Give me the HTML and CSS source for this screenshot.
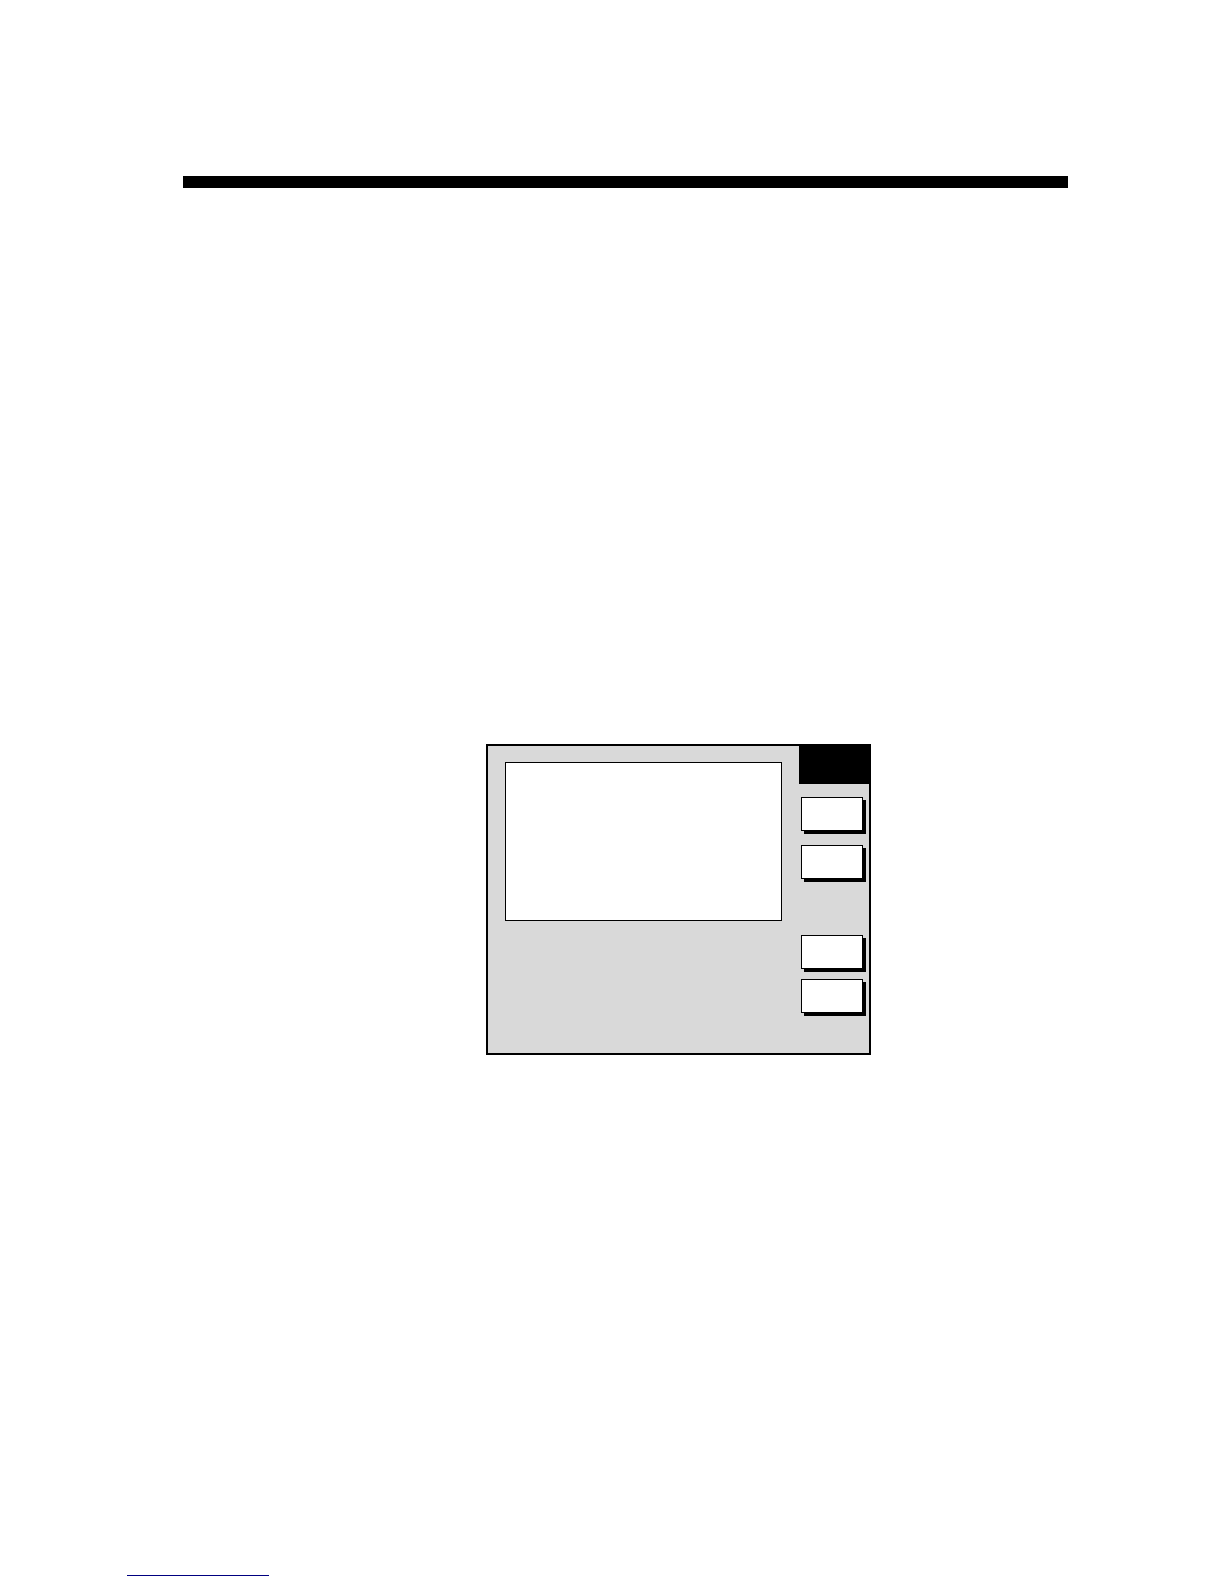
FILE: index.html
```html
<!DOCTYPE html>
<html lang="en">
<head>
    <meta charset="UTF-8">
    <meta name="viewport" content="width=device-width, initial-scale=1.0">
    <title>Display</title>
    <link rel="stylesheet" href="styles.css">
</head>
<body>

    <header class="page-header">
        <hr class="rule">
    </header>

    <main class="content">
        <div class="panel">
            <div class="screen"></div>
            <div class="softkeys">
                <div class="softkeys-title"></div>
                <div class="key-group">
                    <button type="button" class="key" aria-label="Soft key 1"></button>
                    <button type="button" class="key" aria-label="Soft key 2"></button>
                </div>
                <div class="key-group key-group-lower">
                    <button type="button" class="key" aria-label="Soft key 3"></button>
                    <button type="button" class="key" aria-label="Soft key 4"></button>
                </div>
            </div>
        </div>
    </main>

    <footer class="page-footer">
        <a href="#" class="footer-link" aria-label="Back to top"></a>
    </footer>

</body>
</html>
```
FILE: styles.css
```css
* {
    box-sizing: border-box;
}

body {
    display: flex;
    flex-direction: column;
    min-height: 100vh;
    margin: 0;
    background-color: #fff;
    font-family: "Liberation Sans", Arial, sans-serif;
}

.page-header {
    padding: 176px 156px 0 183px;
}

.rule {
    height: 12px;
    margin: 0;
    border: 0;
    background-color: #000;
}

.content {
    display: flex;
    justify-content: center;
    flex: 1;
    padding: 556px 0 0 133px;
}

.panel {
    display: grid;
    grid-template-columns: 1fr 70px;
    gap: 17px;
    align-self: flex-start;
    width: 385px;
    padding-left: 17px;
    border: 2px solid #000;
    background-color: #d9d9d9;
}

.screen {
    height: 159px;
    margin-top: 16px;
    border: 1px solid #000;
    background-color: #fff;
}

.softkeys {
    padding-bottom: 40px;
}

.softkeys-title {
    height: 38px;
    margin-bottom: 13px;
    background-color: #000;
}

.key-group {
    display: flex;
    flex-direction: column;
    gap: 14px;
    padding: 0 6px 0 2px;
}

.key-group-lower {
    gap: 10px;
    margin-top: 56px;
}

.key {
    height: 34px;
    padding: 0;
    border: 1px solid #000;
    border-radius: 0;
    background-color: #fff;
    box-shadow: 3px 3px 0 #000;
}

.page-footer {
    padding: 0 0 8px 127px;
}

.footer-link {
    display: block;
    width: 142px;
    height: 16px;
    border-bottom: 1px solid #000080;
}
```
